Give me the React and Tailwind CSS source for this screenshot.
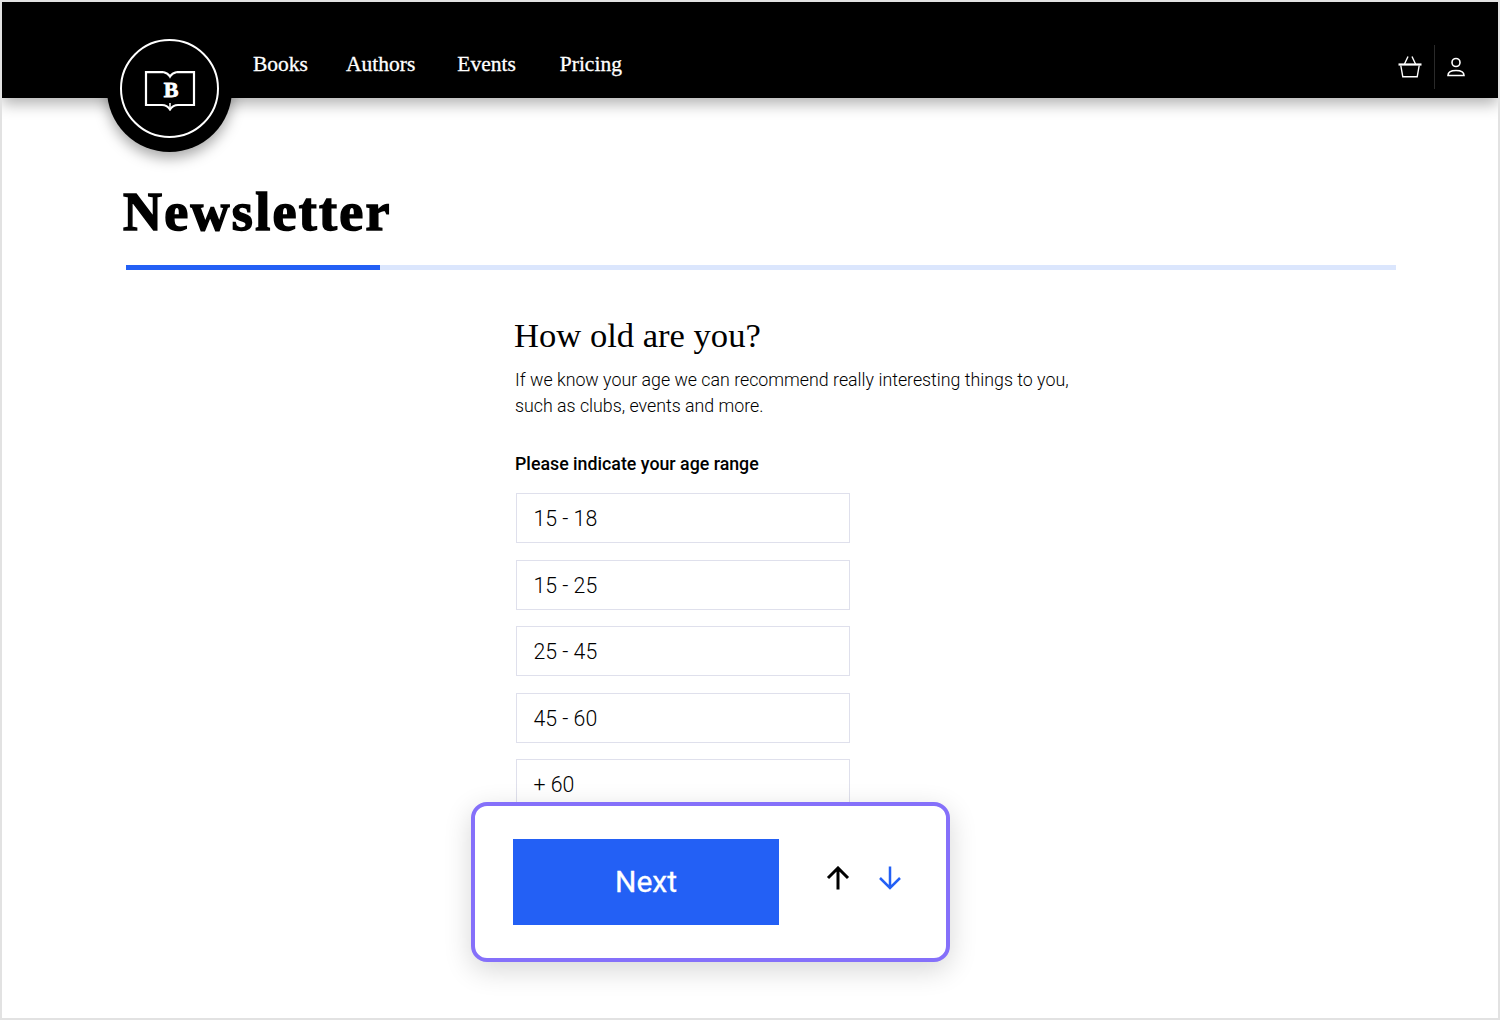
import React from 'react';

const navItems = [
  { label: 'Books', className: 'ml-0' },
  { label: 'Authors', className: 'ml-[38px]' },
  { label: 'Events', className: 'ml-[42px]' },
  { label: 'Pricing', className: 'ml-[44px]' },
];

const ageRanges = ['15 - 18', '15 - 25', '25 - 45', '45 - 60', '+ 60'];

const BookLogo = () => (
  <svg width="52" height="41" viewBox="0 0 52 41" fill="none" stroke="white" strokeWidth="2.200">
    <path d="M19 2.100H2V35H18C21 35 24 36.500 26 39.500C28 36.500 31 35 34 35H50V2.100H33" />
    <path d="M19 2C21.500 2.500 24.500 4 26 6.500C27.500 4 30.500 2.500 33 2" />
    <path d="M26 33V39" strokeWidth="1.500" />
  </svg>
);

const BasketIcon = () => (
  <svg width="24" height="22" viewBox="0 0 24 22" fill="none" stroke="white" strokeWidth="1.400">
    <path d="M0.500 8.500H23.500" strokeWidth="2.200" />
    <path d="M2.800 9.500L4.800 20.800H19.200L21.200 9.500" />
    <path d="M6.500 8L10 0.500M17.500 8L14 0.500" />
  </svg>
);

const UserIcon = () => (
  <svg width="20" height="20" viewBox="0 0 20 20" fill="none" stroke="white" strokeWidth="1.600">
    <circle cx="10" cy="5.500" r="4" />
    <path d="M2 18.500C2 15.500 5 13.500 10 13.500C15 13.500 18 15.500 18 18.500Z" />
  </svg>
);

const Arrow = ({ up, className, strokeWidth }) => (
  <svg width="24" height="24" viewBox="0 0 24 24" fill="none" stroke="currentColor" strokeWidth={strokeWidth} className={className}>
    {up ? <path d="M12 23.500V2M2 12L12 2L22 12" /> : <path d="M12 0.500V22M2 12L12 22L22 12" />}
  </svg>
);

const App = () => {
  return (
    <div className="relative h-[1020px] w-[1500px] overflow-hidden border-2 border-[#e2e2e2] bg-white font-['Roboto',sans-serif] text-black">
      <header className="relative z-10 flex h-[96px] items-start bg-black pl-[251px] pr-[32px] shadow-[0_6px_14px_rgba(0,0,0,0.3)]">
        <nav className="mt-[48px] flex font-['Liberation_Serif',serif] text-[21.500px] leading-[28px] text-white [-webkit-text-stroke:0.3px_white]">
          {navItems.map((item) => (
            <a key={item.label} className={item.className}>{item.label}</a>
          ))}
        </nav>
        <div className="ml-auto mt-[43px] flex items-center">
          <BasketIcon />
          <div className="ml-[12px] mr-[11px] h-[44px] w-px bg-[#2a2a2a]" />
          <UserIcon />
        </div>
      </header>

      <div className="absolute left-[105px] top-[25px] z-20 flex h-[125px] w-[125px] items-center justify-center rounded-full bg-black shadow-[0_6px_14px_rgba(0,0,0,0.35)]">
        <div className="-mt-[3px] flex h-[99px] w-[99px] items-center justify-center rounded-full border-2 border-white">
          <div className="relative mt-[4px] flex items-center justify-center">
            <BookLogo />
            <span className="absolute left-[3px] right-0 top-[9px] text-center font-['Liberation_Serif',serif] text-[22px] font-bold leading-[22px] text-white [-webkit-text-stroke:0.8px_white]">B</span>
          </div>
        </div>
      </div>

      <main className="px-[124px] pt-[83px]">
        <h1 className="-ml-[3px] font-['Liberation_Serif',serif] text-[54px] font-bold leading-[62px] tracking-[2.300px] [-webkit-text-stroke:1.500px_black]">Newsletter</h1>
        <div className="mt-[22px] flex h-[5px] w-[1270px] bg-[#dbe6fd]">
          <div className="h-full w-[254px] bg-[#2360f5]" />
        </div>

        <section className="ml-[389px] pt-[43px]">
          <h2 className="-ml-[1px] font-['Liberation_Serif',serif] text-[34.600px] font-normal leading-[44px]">How old are you?</h2>
          <p className="mt-[10px] text-[17.800px] font-light leading-[26px]">
            If we know your age we can recommend really interesting things to you,<br />
            such as clubs, events and more.
          </p>
          <h3 className="mt-[32px] text-[17.800px] font-medium leading-[26px]">Please indicate your age range</h3>
          <div className="mt-[16px] ml-[1px] flex w-[334px] flex-col gap-[16.500px]">
            {ageRanges.map((age) => (
              <div key={age} className="flex h-[50px] items-center border-[1.500px] border-[#dfe0ec] px-[16.500px] pt-[2px] text-[21.300px] font-light leading-[28px]">
                {age}
              </div>
            ))}
          </div>
        </section>
      </main>

      <div className="absolute left-[469px] top-[800px] z-10 flex h-[160px] w-[479px] items-center rounded-[16px] border-4 border-[#8570fa] bg-white pl-[38px] shadow-[0_8px_28px_rgba(0,0,0,0.16)]">
        <button className="h-[86px] w-[266px] bg-[#2360f5] pb-[2px] text-[30px] font-normal text-white [-webkit-text-stroke:0.3px_white]">Next</button>
        <Arrow up strokeWidth={3} className="ml-[47px] -mt-[9px] text-black" />
        <Arrow strokeWidth={2.500} className="ml-[28px] -mt-[9px] text-[#2360f5]" />
      </div>
    </div>
  );
};

export default App;
